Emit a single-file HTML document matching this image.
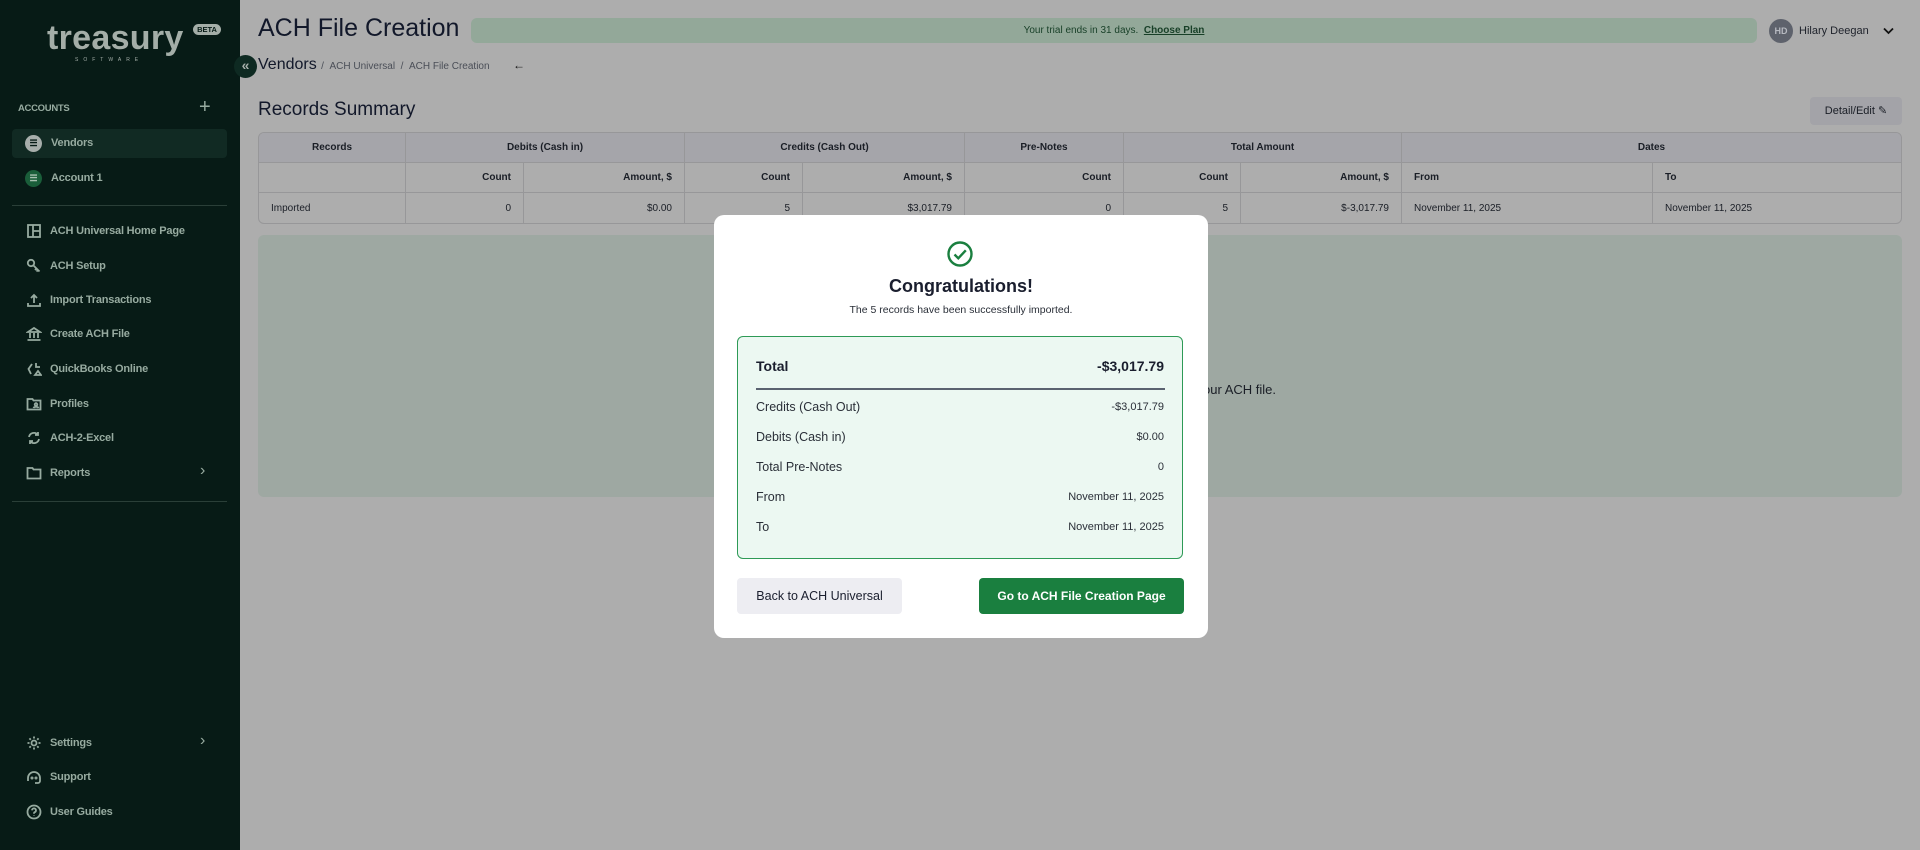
<!DOCTYPE html>
<html><head><meta charset="utf-8"><style>
*{box-sizing:border-box;margin:0;padding:0}
body{width:1920px;height:850px;overflow:hidden;background:#adadad;font-family:"Liberation Sans",sans-serif;position:relative;color:#1a1e26}
.abs{position:absolute}
#sb{position:absolute;left:0;top:0;width:240px;height:850px;background:#071b16;color:#97aba0}
.nav{position:absolute;left:26px;font-size:11px;font-weight:bold;display:flex;align-items:center;height:20px;letter-spacing:-0.2px}
.nav svg{width:16px;height:16px;margin-right:8px;fill:none;stroke:#97aba0;stroke-width:1.8}
.chev{position:absolute;left:200px;font-size:16px}
.div{position:absolute;left:12px;width:215px;height:1px;background:#2a3f38}
table{border-collapse:separate;border-spacing:0}
.tb{position:absolute;left:258px;top:132px;width:1644px;border:1px solid #979799;border-radius:6px;overflow:hidden;font-size:10px}
.tb td{height:30px;border-right:1px solid #979799;border-bottom:1px solid #979799;padding:0 12px;color:#1a1e26}
.tb tr:last-child td{border-bottom:none}
.tb td:last-child{border-right:none}
.h td{background:#a5a5aa;font-weight:bold;text-align:center}
.r{text-align:right}
.b{font-weight:bold}
.row{position:absolute;left:756px;width:408px;display:flex;justify-content:space-between;align-items:center;font-size:12.5px;color:#2a2f38}
.row span:last-child{font-size:11px}
</style></head><body>
<div id="sb">
  <div class="abs" style="left:47px;top:19px;font-size:34px;font-weight:bold;color:#a4aea8;letter-spacing:0.3px">treasury</div>
  <div class="abs" style="left:193px;top:24px;width:28px;height:11px;border-radius:6px;background:#a4aea8;color:#071b16;font-size:7.5px;font-weight:bold;text-align:center;line-height:11px">BETA</div>
  <div class="abs" style="left:75px;top:57px;font-size:5px;letter-spacing:5px;color:#a4aea8">SOFTWARE</div>
  <div class="abs" style="left:18px;top:103px;font-size:9.5px;font-weight:bold;letter-spacing:-0.3px">ACCOUNTS</div>
  <div class="abs" style="left:199px;top:96px;font-size:20px">+</div>
  <div class="abs" style="left:12px;top:129px;width:215px;height:29px;background:#112a23;border-radius:4px"></div>
  <div class="abs" style="left:25px;top:135px;width:17px;height:17px;border-radius:50%;background:#a7aeab;color:#071b16;font-size:9px;text-align:center;line-height:17px;font-weight:bold">&#x2630;</div>
  <div class="abs" style="left:51px;top:137px;font-size:11px;font-weight:bold;letter-spacing:-0.2px">Vendors</div>
  <div class="abs" style="left:25px;top:170px;width:17px;height:17px;border-radius:50%;background:#1a5e3a;color:#a7c0b0;font-size:9px;text-align:center;line-height:17px;font-weight:bold">&#x2630;</div>
  <div class="abs" style="left:51px;top:172px;font-size:11px;font-weight:bold;letter-spacing:-0.2px">Account 1</div>
  <div class="div" style="top:205px"></div>
  <div class="nav" style="top:221px"><svg viewBox="0 0 16 16"><rect x="2" y="2" width="12" height="12"/><path d="M7 2v12M7 8h7"/></svg>ACH Universal Home Page</div>
  <div class="nav" style="top:256px"><svg viewBox="0 0 16 16"><circle cx="5" cy="5" r="3.2"/><path d="M7.5 7.5l6 6M10.5 10.5l-1.5 1.5M12 12l-1.5 1.5"/></svg>ACH Setup</div>
  <div class="nav" style="top:290px"><svg viewBox="0 0 16 16"><path d="M8 11V3M5 6l3-3 3 3M2 11v3h12v-3"/></svg>Import Transactions</div>
  <div class="nav" style="top:324px"><svg viewBox="0 0 16 16"><path d="M2 6l6-4 6 4zM4 7v5M8 7v5M12 7v5M1.5 14h13"/></svg>Create ACH File</div>
  <div class="nav" style="top:359px"><svg viewBox="0 0 16 16"><path d="M6 3L2.5 8 5 13M10 2v4h4M9 14l3-4 3 4z"/></svg>QuickBooks Online</div>
  <div class="nav" style="top:394px"><svg viewBox="0 0 16 16"><path d="M1.5 3h5l1 1.5h7v9h-13z"/><circle cx="10" cy="8.5" r="1.3"/><path d="M7.5 12c.5-1.5 4.5-1.5 5 0"/></svg>Profiles</div>
  <div class="nav" style="top:428px"><svg viewBox="0 0 16 16"><path d="M3 7a5 5 0 0 1 9-2M13 9a5 5 0 0 1-9 2M12 2v3H9M4 14v-3h3"/></svg>ACH-2-Excel</div>
  <div class="nav" style="top:463px"><svg viewBox="0 0 16 16"><path d="M1.5 3h5l1 1.5h7v9h-13z"/></svg>Reports</div>
  <div class="chev" style="top:462px">&#x203A;</div>
  <div class="div" style="top:501px"></div>
  <div class="nav" style="top:733px"><svg viewBox="0 0 16 16"><circle cx="8" cy="8" r="2.5"/><path d="M8 1.5v2M8 12.5v2M1.5 8h2M12.5 8h2M3.4 3.4l1.4 1.4M11.2 11.2l1.4 1.4M3.4 12.6l1.4-1.4M11.2 4.8l1.4-1.4"/></svg>Settings</div>
  <div class="chev" style="top:732px">&#x203A;</div>
  <div class="nav" style="top:767px"><svg viewBox="0 0 16 16"><path d="M2 12V9a6 6 0 0 1 12 0v3a2 2 0 0 1-2 2H9"/><circle cx="6" cy="9" r=".6"/><circle cx="10" cy="9" r=".6"/></svg>Support</div>
  <div class="nav" style="top:802px"><svg viewBox="0 0 16 16"><circle cx="8" cy="8" r="6.5"/><path d="M6 6.3a2 2 0 1 1 2.5 2c-.5.2-.5.7-.5 1.4M8 11.5v.5"/></svg>User Guides</div>
</div>
<div class="abs" style="left:234px;top:55px;width:23px;height:23px;border-radius:50%;background:#0e2a22;color:#a7b0ab;font-size:14px;text-align:center;line-height:21px;font-weight:bold">&#xAB;</div>

<div class="abs" style="left:258px;top:14px;font-size:25px;color:#12182a">ACH File Creation</div>
<div class="abs" style="left:471px;top:18px;width:1286px;height:25px;background:#93a899;border-radius:6px;font-size:10px;color:#173f27;text-align:center;line-height:25px">Your trial ends in 31 days.&nbsp; <span style="text-decoration:underline;font-weight:bold">Choose Plan</span></div>
<div class="abs" style="left:1769px;top:19px;width:24px;height:24px;border-radius:50%;background:#5e626c;color:#b6b9c0;font-size:9px;font-weight:bold;text-align:center;line-height:24px">HD</div>
<div class="abs" style="left:1799px;top:25px;font-size:11px;color:#1e222b">Hilary Deegan</div>
<svg class="abs" style="left:1883px;top:27px" width="11" height="8" viewBox="0 0 11 8"><path d="M1 1.5l4.5 4.5 4.5-4.5" stroke="#111" stroke-width="1.8" fill="none"/></svg>

<div class="abs" style="left:258px;top:56px;font-size:16px;color:#12182a">Vendors <span style="font-size:10px;color:#4a4e57">/ &nbsp;ACH Universal &nbsp;/ &nbsp;ACH File Creation</span></div>
<div class="abs" style="left:513px;top:58px;font-size:12px;color:#111">&#x2190;</div>

<div class="abs" style="left:258px;top:99px;font-size:19px;color:#12182a">Records Summary</div>
<div class="abs" style="left:1810px;top:97px;width:92px;height:28px;background:#a3a3a8;border-radius:4px;font-size:11px;color:#1a1e26;line-height:28px;text-align:center">Detail/Edit &#x270E;</div>

<table class="tb">
<tr class="h"><td style="width:147px">Records</td><td colspan="2">Debits (Cash in)</td><td colspan="2">Credits (Cash Out)</td><td>Pre-Notes</td><td colspan="2">Total Amount</td><td colspan="2">Dates</td></tr>
<tr class="b"><td></td><td class="r" style="width:118px">Count</td><td class="r" style="width:161px">Amount, $</td><td class="r" style="width:118px">Count</td><td class="r" style="width:162px">Amount, $</td><td class="r" style="width:159px">Count</td><td class="r" style="width:117px">Count</td><td class="r" style="width:161px">Amount, $</td><td style="width:251px">From</td><td>To</td></tr>
<tr><td>Imported</td><td class="r">0</td><td class="r">$0.00</td><td class="r">5</td><td class="r">$3,017.79</td><td class="r">0</td><td class="r">5</td><td class="r">$-3,017.79</td><td>November 11, 2025</td><td>November 11, 2025</td></tr>
</table>

<div class="abs" style="left:258px;top:235px;width:1644px;height:262px;background:#9ea8a2;border-radius:6px"></div>
<div class="abs" style="left:876px;top:382px;width:400px;text-align:right;font-size:13px;color:#1a1e26">Your records are ready. Continue to create your ACH file.</div>

<div class="abs" style="left:714px;top:215px;width:494px;height:423px;background:#fff;border-radius:10px"></div>
<svg class="abs" style="left:946px;top:240px" width="28" height="28" viewBox="0 0 28 28"><circle cx="14" cy="14" r="11.5" stroke="#1a7f3f" stroke-width="2.4" fill="none"/><path d="M8.5 14.5l3.8 3.8 7.5-8" stroke="#1a7f3f" stroke-width="2.4" fill="none"/></svg>
<div class="abs" style="left:714px;top:276px;width:494px;text-align:center;font-size:18px;font-weight:bold;color:#1a1e2e">Congratulations!</div>
<div class="abs" style="left:714px;top:304px;width:494px;text-align:center;font-size:10.5px;color:#2a2f38">The 5 records have been successfully imported.</div>

<div class="abs" style="left:737px;top:336px;width:446px;height:223px;background:#ecf8f2;border:1px solid #2e9a56;border-radius:6px"></div>
<div class="row" style="top:358px;font-weight:bold;font-size:14px;color:#1a1e2e"><span>Total</span><span style="font-size:14px">-$3,017.79</span></div>
<div class="abs" style="left:756px;top:388px;width:409px;height:2px;background:#5a6270"></div>
<div class="row" style="top:400px"><span>Credits (Cash Out)</span><span>-$3,017.79</span></div>
<div class="row" style="top:430px"><span>Debits (Cash in)</span><span>$0.00</span></div>
<div class="row" style="top:460px"><span>Total Pre-Notes</span><span>0</span></div>
<div class="row" style="top:490px"><span>From</span><span>November 11, 2025</span></div>
<div class="row" style="top:520px"><span>To</span><span>November 11, 2025</span></div>

<div class="abs" style="left:737px;top:578px;width:165px;height:36px;background:#ededf2;border-radius:4px;font-size:12.5px;color:#1a1e2e;text-align:center;line-height:36px">Back to ACH Universal</div>
<div class="abs" style="left:979px;top:578px;width:205px;height:36px;background:#1a7f3f;border-radius:4px;font-size:12px;font-weight:bold;color:#fff;text-align:center;line-height:36px">Go to ACH File Creation Page</div>
</body></html>
